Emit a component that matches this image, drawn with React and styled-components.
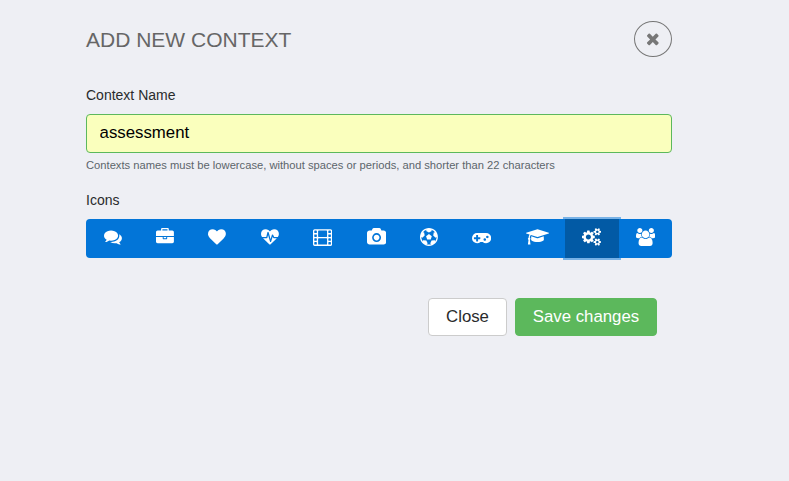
import React from "react";
import styled, { createGlobalStyle } from "styled-components";

const GlobalStyle = createGlobalStyle`
  * { box-sizing: border-box; }
  html, body { margin: 0; background: #eeeff4; }
  body, button, input { font-family: "Liberation Sans", Arial, sans-serif; }
`;

const Page = styled.main`
  min-height: 481px;
  padding: 21px 117px 0 86px;
  background: #eeeff4;
`;

const Header = styled.header`
  display: flex;
  justify-content: space-between;
  align-items: flex-start;
  height: 37px;
`;

const Title = styled.h1`
  margin: 7px 0 0;
  font-size: 21px;
  line-height: 24px;
  font-weight: 400;
  color: #666;
  white-space: nowrap;
`;

const CloseButton = styled.button`
  display: flex;
  align-items: center;
  justify-content: center;
  width: 38px;
  height: 36px;
  padding: 0;
  border: 1px solid #777;
  border-radius: 50%;
  background: transparent;
  color: #777;
`;

const Label = styled.label`
  display: block;
  margin-top: ${(p) => p.$top}px;
  font-size: 14px;
  line-height: 18px;
  color: #292b2c;
`;

const NameInput = styled.input`
  display: block;
  width: 100%;
  height: 39px;
  margin-top: 10px;
  padding: 0 12.6px 1px;
  border: 1px solid #5cb85c;
  border-radius: 4px;
  background: #faffbd;
  color: #000;
  font-size: 16.8px;
  outline: none;
`;

const Help = styled.p`
  margin: 5px 0 0;
  font-size: 11.2px;
  line-height: 14px;
  color: #5c656b;
  white-space: nowrap;
`;

const IconBar = styled.div`
  display: flex;
  height: 39px;
  margin-top: 10px;
  padding-left: 0.8px;
  border-radius: 4px;
  background: #0275d8;
`;

const IconButton = styled.button`
  flex: 1 1 auto;
  display: flex;
  align-items: flex-start;
  justify-content: center;
  margin-left: ${(p) => (p.$active ? "-1px" : "0")};
  padding: 9px 0 0;
  border: 0;
  border-radius: 0;
  color: #fff;
  background: ${(p) => (p.$active ? "#025aa5" : "transparent")};
  box-shadow: ${(p) => (p.$active ? "0 0 0 2px rgba(2, 117, 216, 0.5)" : "none")};
`;

const Glyph = styled.svg`
  display: block;
  width: ${(p) => (p.$units * p.$size) / 1792}px;
  height: ${(p) => p.$size}px;
  fill: currentColor;
`;

const Footer = styled.footer`
  display: flex;
  justify-content: flex-end;
  gap: 8px;
  margin-top: 40px;
  padding-right: 15px;
`;

const ActionButton = styled.button`
  width: ${(p) => p.$width}px;
  height: 38px;
  padding: 0;
  border: 1px solid ${(p) => (p.$primary ? "#5cb85c" : "#ccc")};
  border-radius: 4px;
  background: ${(p) => (p.$primary ? "#5cb85c" : "#fff")};
  color: ${(p) => (p.$primary ? "#fff" : "#292b2c")};
  font-size: 16.8px;
  white-space: nowrap;
`;

const smallCog =
  "m0-1024v140q0 16-149 31-12 27-30 52 51 113 51 138 0 4-4 7-122 71-124 71-8 0-46-47t-52-68q-20 2-30 2t-30-2q-14 21-52 68t-46 47q-2 0-124-71-4-3-4-7 0-25 51-138-18-25-30-52-149-15-149-31v-140q0-16 149-31 13-29 30-52-51-113-51-138 0-4 4-7 4-2 35-20t59-34 30-16q8 0 46 46.5t52 67.5q20-2 30-2t30 2q51-71 92-112l6-2q4 0 124 70 4 3 4 7 0 25-51 138 17 23 30 52 149 15 149 31z";

const filmHole = (x, y) =>
  `M${x + 64} ${y}h128q26 0 45 19t19 45v128q0 26-19 45t-45 19h-128q-26 0-45-19t-19-45v-128q0-26 19-45t45-19z`;
const filmFrame = (y) =>
  `M576 ${y}h768q26 0 45 19t19 45v512q0 26-19 45t-45 19h-768q-26 0-45-19t-19-45v-512q0-26 19-45t45-19z`;
const film =
  "M160 128h1600q66 0 113 47t47 113v1344q0 66-47 113t-113 47h-1600q-66 0-113-47t-47-113v-1344q0-66 47-113t113-47z" +
  [256, 640, 1024, 1408].map((y) => filmHole(128, y) + filmHole(1536, y)).join("") +
  filmFrame(256) +
  filmFrame(1024);

const ICONS = [
  {
    name: "comments",
    units: 1792,
    d: "M1408 768q0 139-94 257t-256.5 186.5-353.5 68.5q-86 0-176-16-124 88-278 128-36 9-86 16h-3q-11 0-20.5-8t-11.5-21q-1-3-1-6.5t.5-6.5 2-6l2.5-5 3.5-5.5 4-5 4.5-5 4-4.5q5-6 23-25t26-29.5 22.5-29 25-38.5 20.5-44q-124-72-195-177t-71-224q0-139 94-257t256.5-186.5 353.5-68.5 353.5 68.5 256.5 186.5 94 257zm384 256q0 120-71 224.5t-195 176.5q10 24 20.5 44t25 38.5 22.5 29 26 29.5 23 25q1 1 4 4.5t4.5 5 4 5 3.5 5.5l2.5 5 2 6 .5 6.5-1 6.5q-3 14-13 22t-22 7q-50-7-86-16-154-40-278-128-90 16-176 16-271 0-472-132 58 4 88 4 161 0 309-45t264-129q125-92 192-212t67-254q0-77-23-152 129 71 204 178t75 230z",
  },
  {
    name: "briefcase",
    units: 1792,
    d: "M640 256h512v-128h-512v128zm1152 640v480q0 66-47 113t-113 47h-1472q-66 0-113-47t-47-113v-480h672v160q0 26 19 45t45 19h320q26 0 45-19t19-45v-160h672zm-768 0v128h-256v-128h256zm768-480v384h-1792v-384q0-66 47-113t113-47h352v-160q0-40 28-68t68-28h576q40 0 68 28t28 68v160h352q66 0 113 47t47 113z",
  },
  {
    name: "heart",
    units: 1792,
    d: "M896 1664q-26 0-44-18l-624-602q-10-8-27.5-26t-55.5-65.5-68-97.5-53.5-121-23.5-138q0-220 127-344t351-124q62 0 126.5 21.5t120 58 95.5 68.5 76 68q36-36 76-68t95.5-68.5 120-58 126.5-21.5q224 0 351 124t127 344q0 221-229 450l-623 600q-18 18-44 18z",
  },
  {
    name: "heartbeat",
    units: 1792,
    d: "M1280 1024h305q-5 6-10 10.5t-9 7.5l-3 4-623 600q-18 18-44 18t-44-18l-624-602q-5-2-21-20h369q22 0 39.5-13.5t22.5-34.5l70-281 190 667q6 20 23 33t39 13q21 0 38-13t23-33l146-485 56 112q18 35 57 35zm512-428q0 145-103 300h-369l-111-221q-8-17-25.5-27t-36.5-8q-45 5-56 46l-129 430-196-686q-6-20-23.5-33t-39.5-13-39 13.5-22 34.5l-116 464h-423q-103-155-103-300 0-220 127-344t351-124q62 0 126.5 21.5t120 58 95.5 68.5 76 68q36-36 76-68t95.5-68.5 120-58 126.5-21.5q224 0 351 124t127 344z",
  },
  { name: "film", units: 1920, d: film },
  {
    name: "camera",
    units: 1920,
    d: "M960 672q119 0 203.5 84.5t84.5 203.5-84.5 203.5-203.5 84.5-203.5-84.5-84.5-203.5 84.5-203.5 203.5-84.5zm704-416q106 0 181 75t75 181v896q0 106-75 181t-181 75h-1408q-106 0-181-75t-75-181v-896q0-106 75-181t181-75h224l51-136q19-49 69.5-84.5t103.5-35.5h512q53 0 103.5 35.5t69.5 84.5l51 136h224zm-704 1152q185 0 316.5-131.5t131.5-316.5-131.5-316.5-316.5-131.5-316.5 131.5-131.5 316.5 131.5 316.5 316.5 131.5z",
  },
  {
    name: "football",
    units: 1792,
    d: "M609 816l287-208 287 208-109 336h-355zm287-816q182 0 348 71t286 191 191 286 71 348-71 348-191 286-286 191-348 71-348-71-286-191-191-286-71-348 71-348 191-286 286-191 348-71zm619 1350q149-203 149-454v-3l-102 89-240-224 63-323 134 12q-150-206-389-282l53 124-287 159-287-159 53-124q-239 76-389 282l135-12 62 323-240 224-102-89v3q0 251 149 454l30-132 326 40 139 298-116 69q117 39 240 39t240-39l-116-69 139-298 326-40z",
  },
  {
    name: "gamepad",
    units: 1920,
    d: "M832 1088v-128q0-14-9-23t-23-9h-192v-192q0-14-9-23t-23-9h-128q-14 0-23 9t-9 23v192h-192q-14 0-23 9t-9 23v128q0 14 9 23t23 9h192v192q0 14 9 23t23 9h128q14 0 23-9t9-23v-192h192q14 0 23-9t9-23zm576 64q0-53-37.5-90.5t-90.5-37.5-90.5 37.5-37.5 90.5 37.5 90.5 90.5 37.5 90.5-37.5 37.5-90.5zm256-256q0-53-37.5-90.5t-90.5-37.5-90.5 37.5-37.5 90.5 37.5 90.5 90.5 37.5 90.5-37.5 37.5-90.5zm256 128q0 212-150 362t-362 150q-192 0-338-128h-220q-146 128-338 128-212 0-362-150t-150-362 150-362 362-150h896q212 0 362 150t150 362z",
  },
  {
    name: "graduation cap",
    units: 2304,
    d: "M1774 836l18 316q4 69-82 128t-235 93.5-323 34.5-323-34.5-235-93.5-82-128l18-316 574 181q22 7 48 7t48-7zm530-324q0 23-22 31l-1120 352q-4 1-10 1t-10-1l-652-206q-43 34-71 111.5t-34 178.5q63 36 63 109 0 69-58 107l58 433q2 14-8 25-9 11-24 11h-192q-15 0-24-11-10-11-8-25l58-433q-58-38-58-107 0-73 65-111 11-207 98-330l-333-104q-22-8-22-31t22-31l1120-352q4-1 10-1t10 1l1120 352q22 8 22 31z",
  },
  {
    name: "cogs",
    units: 1920,
    active: true,
    d:
      "M896 896q0-106-75-181t-181-75-181 75-75 181 75 181 181 75 181-75 75-181zm768 512q0-52-38-90t-90-38-90 38-38 90q0 53 37.5 90.5t90.5 37.5 90.5-37.5 37.5-90.5zm0-1024q0-52-38-90t-90-38-90 38-38 90q0 53 37.5 90.5t90.5 37.5 90.5-37.5 37.5-90.5zm-384 421v185q0 10-7 19.5t-16 10.5l-155 24q-11 35-32 76 34 48 90 115 7 11 7 20 0 12-7 19-23 30-82.5 89.5t-78.5 59.5q-11 0-21-7l-115-90q-37 19-77 31-11 108-23 155-7 24-30 24h-186q-11 0-20-7.5t-10-17.5l-23-153q-34-10-75-31l-118 89q-7 7-20 7-11 0-21-8-144-133-144-160 0-9 7-19 10-14 41-53t47-61q-23-44-35-82l-152-24q-10-1-17-9.5t-7-19.5v-185q0-10 7-19.5t16-10.5l155-24q11-35 32-76-34-48-90-115-7-11-7-20 0-12 7-20 22-30 82-89t79-59q11 0 21 7l115 90q34-18 77-32 11-108 23-154 7-24 30-24h186q11 0 20 7.5t10 17.5l23 153q34 10 75 31l118-89q8-7 20-7 11 0 21 8 144 133 144 160 0 8-7 19-12 16-42 54t-45 60q23 48 34 82l152 23q10 2 17 10.5t7 19.5zm640 533" +
      smallCog.slice("m0-1024".length) +
      smallCog,
  },
  {
    name: "users",
    units: 1920,
    d: "M593 896q-162 5-265 128h-134q-82 0-138-40.5t-56-118.5q0-353 124-353 6 0 43.5 21t97.5 42.5 119 21.5q67 0 133-23-5 37-5 66 0 139 81 256zm1071 637q0 120-73 189.5t-194 69.5h-874q-121 0-194-69.5t-73-189.5q0-53 3.5-103.5t14-109 26.5-108.5 43-97.5 62-81 85.5-53.5 111.5-20q10 0 43 21.5t73 48 107 48 135 21.5 135-21.5 107-48 73-48 43-21.5q61 0 111.5 20t85.5 53.5 62 81 43 97.5 26.5 108.5 14 109 3.5 103.5zm-1024-1277q0 106-75 181t-181 75-181-75-75-181 75-181 181-75 181 75 75 181zm704 384q0 159-112.5 271.5t-271.5 112.5-271.5-112.5-112.5-271.5 112.5-271.5 271.5-112.5 271.5 112.5 112.5 271.5zm576 225q0 78-56 118.5t-138 40.5h-134q-103-123-265-128 81-117 81-256 0-29-5-66 66 23 133 23 59 0 119-21.5t97.5-42.5 43.5-21q124 0 124 353zm-128-609q0 106-75 181t-181 75-181-75-75-181 75-181 181-75 181 75 75 181z",
  },
];

const TIMES =
  "M1490 1322q0 40-28 68l-136 136q-28 28-68 28t-68-28l-294-294-294 294q-28 28-68 28t-68-28l-136-136q-28-28-28-68t28-68l294-294-294-294q-28-28-28-68t28-68l136-136q28-28 68-28t68 28l294 294 294-294q28-28 68-28t68 28l136 136q28 28 28 68t-28 68l-294 294 294 294q28 28 28 68z";

function Icon({ units, d, size = 17.9 }) {
  return (
    <Glyph $units={units} $size={size} viewBox={`0 0 ${units} 1792`} aria-hidden="true">
      <path fillRule="evenodd" d={d} />
    </Glyph>
  );
}

export default function App() {
  return (
    <Page>
      <GlobalStyle />
      <Header>
        <Title>ADD NEW CONTEXT</Title>
        <CloseButton aria-label="Close dialog">
          <Icon units={1792} d={TIMES} size={17.6} />
        </CloseButton>
      </Header>
      <Label $top={28} htmlFor="context-name">Context Name</Label>
      <NameInput id="context-name" defaultValue="assessment" />
      <Help>Contexts names must be lowercase, without spaces or periods, and shorter than 22 characters</Help>
      <Label $top={19} as="div">Icons</Label>
      <IconBar>
        {ICONS.map((icon) => (
          <IconButton key={icon.name} aria-label={icon.name} $active={icon.active}>
            <Icon units={icon.units} d={icon.d} />
          </IconButton>
        ))}
      </IconBar>
      <Footer>
        <ActionButton $width={79}>Close</ActionButton>
        <ActionButton $width={142} $primary>Save changes</ActionButton>
      </Footer>
    </Page>
  );
}
